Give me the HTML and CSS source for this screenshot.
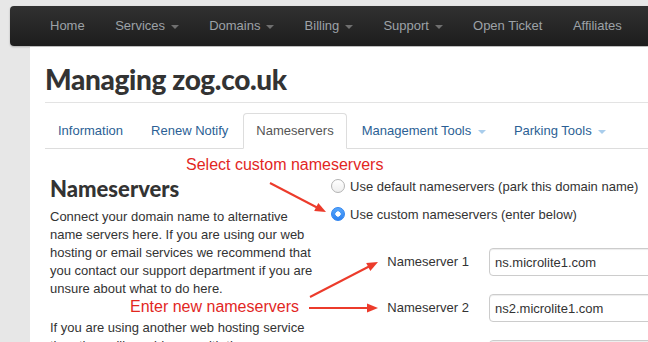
FILE: index.html
```html
<!DOCTYPE html>
<html lang="en">
<head>
    <meta charset="UTF-8">
    <meta name="viewport" content="width=device-width, initial-scale=1.0">
    <title>Managing zog.co.uk - Nameservers</title>
    <link rel="stylesheet" href="styles.css">
</head>
<body>
    <nav class="navbar">
        <a href="#">Home</a>
        <a href="#">Services <b class="caret"></b></a>
        <a href="#">Domains <b class="caret"></b></a>
        <a href="#">Billing <b class="caret"></b></a>
        <a href="#">Support <b class="caret"></b></a>
        <a href="#">Open Ticket</a>
        <a href="#">Affiliates</a>
    </nav>

    <div class="page">
        <h1 class="page-title">Managing zog.co.uk</h1>

        <ul class="tabs">
            <li><a href="#">Information</a></li>
            <li><a href="#">Renew Notify</a></li>
            <li><a href="#" class="active">Nameservers</a></li>
            <li><a href="#">Management Tools <b class="caret"></b></a></li>
            <li><a href="#">Parking Tools <b class="caret"></b></a></li>
        </ul>

        <div class="tab-body">
            <div class="intro">
                <h2>Nameservers</h2>
                <p>Connect your domain name to alternative name servers here. If you are using our web hosting or email services we recommend that you contact our support department if you are unsure about what to do here.</p>
                <p>If you are using another web hosting service then they will provide you with the nameservers to use.</p>
            </div>

            <form class="ns-form">
                <div class="radio-row"><span class="radio"></span>Use default nameservers (park this domain name)</div>
                <div class="radio-row"><span class="radio checked"></span>Use custom nameservers (enter below)</div>
                <div class="field">
                    <label>Nameserver 1</label>
                    <input type="text" value="ns.microlite1.com">
                </div>
                <div class="field">
                    <label>Nameserver 2</label>
                    <input type="text" value="ns2.microlite1.com">
                </div>
                <div class="field">
                    <label>Nameserver 3</label>
                    <input type="text" value="">
                </div>
            </form>
        </div>
    </div>

    <!-- annotations drawn over the screenshot -->
    <div class="callout callout-select">Select custom nameservers</div>
    <div class="callout callout-enter">Enter new nameservers</div>
    <svg class="arrows" width="648" height="342" viewBox="0 0 648 342">
        <g stroke="#ec3b2b" stroke-width="2" fill="none">
            <line x1="270" y1="183" x2="317" y2="207.5"/>
            <line x1="310" y1="297" x2="369" y2="266.5"/>
            <line x1="309" y1="308" x2="368" y2="308"/>
        </g>
        <g fill="#ec3b2b">
            <polygon points="326,212 314.2,211 318.3,203"/>
            <polygon points="378,262 370.3,271 366.2,263"/>
            <polygon points="378,308 367,303.5 367,312.5"/>
        </g>
    </svg>
</body>
</html>
```

FILE: styles.css
```css
html, body {
    margin: 0;
    height: 100%;
    overflow: hidden;
}

body {
    font-family: "Liberation Sans", Arial, sans-serif;
    font-size: 13px;
    color: #333;
    background-color: #e7e7e7;
    position: relative;
}

a {
    text-decoration: none;
}

.navbar {
    display: flex;
    height: 40px;
    margin: 6px 0 0 10px;
    padding-left: 25px;
    background: linear-gradient(#313131, #1d1d1d);
    border-radius: 4px 0 0 4px;
    box-shadow: 0 1px 2px rgba(0, 0, 0, 0.25);
}

.navbar a {
    padding: 0 15px;
    line-height: 40px;
    color: #9da2a7;
}

.navbar a + a {
    margin-left: 0.5px;
}

.caret {
    display: inline-block;
    width: 0;
    height: 0;
    margin-left: 2px;
    vertical-align: middle;
    border-top: 4px solid #6f6f6f;
    border-left: 4px solid transparent;
    border-right: 4px solid transparent;
}

.page {
    margin: 1px 0 0 30px;
    padding: 0 0 40px 15px;
    background-color: #fff;
    min-height: 400px;
}

.page-title {
    margin: 0;
    padding: 16px 0 7px;
    font-family: Lato, "Liberation Sans", sans-serif;
    font-weight: 900;
    font-size: 28px;
    line-height: 32px;
    letter-spacing: -0.35px;
    color: #333;
    border-bottom: 1px solid #e3e3e3;
}

.tabs {
    display: flex;
    list-style: none;
    margin: 10px 0 0;
    padding: 0;
    border-bottom: 1px solid #ddd;
}

.tabs li {
    margin-right: 2px;
}

.tabs a {
    display: block;
    padding: 8px 12px;
    line-height: 18px;
    color: #2c5f95;
    border: 1px solid transparent;
    border-radius: 4px 4px 0 0;
    margin-bottom: -1px;
}

.tabs a.active {
    color: #555;
    background-color: #fff;
    border-color: #ddd #ddd transparent;
}

.tabs .caret {
    margin-left: 3px;
    border-top-color: #a9cdec;
}

.tab-body {
    display: flex;
}

.intro {
    flex: none;
    width: 270px;
    padding: 27px 0 0 5px;
}

.intro h2 {
    margin: 0;
    font-family: Lato, "Liberation Sans", sans-serif;
    font-weight: 900;
    font-size: 22px;
    line-height: 26px;
    letter-spacing: 0;
    color: #333;
}

.intro p {
    margin: 6px 0 21px;
    line-height: 18px;
}

.ns-form {
    flex: none;
    margin: 0 0 0 9px;
    padding-top: 23px;
}

.radio-row {
    display: flex;
    align-items: center;
    height: 28px;
    padding-left: 2px;
}

.radio {
    box-sizing: border-box;
    width: 14px;
    height: 14px;
    margin-right: 5px;
    border: 1px solid #b3b3b3;
    border-radius: 50%;
    background: linear-gradient(#ffffff, #eeeeee);
}

.radio.checked {
    border-color: #2f84ef;
    background: radial-gradient(circle, #fff 0, #fff 2.4px, transparent 2.9px), linear-gradient(#56a6fb, #2d82f1);
}

.field {
    display: flex;
    margin-top: 20px;
}

.field + .field {
    margin-top: 18px;
}

.field label {
    width: 140px;
    text-align: right;
    line-height: 28px;
}

.field input {
    box-sizing: border-box;
    width: 270px;
    height: 28px;
    margin-left: 20px;
    padding: 4px 5px;
    font-family: "Liberation Sans", Arial, sans-serif;
    font-size: 13px;
    color: #333;
    border: 1px solid #ccc;
    border-radius: 4px;
    box-shadow: inset 0 1px 1px rgba(0, 0, 0, 0.075);
}

.callout {
    position: absolute;
    font-size: 16px;
    line-height: 16px;
    color: #e2271f;
    white-space: nowrap;
}

.callout-select {
    left: 186px;
    top: 157px;
}

.callout-enter {
    left: 130px;
    top: 299px;
}

.arrows {
    position: absolute;
    left: 0;
    top: 0;
}
```
